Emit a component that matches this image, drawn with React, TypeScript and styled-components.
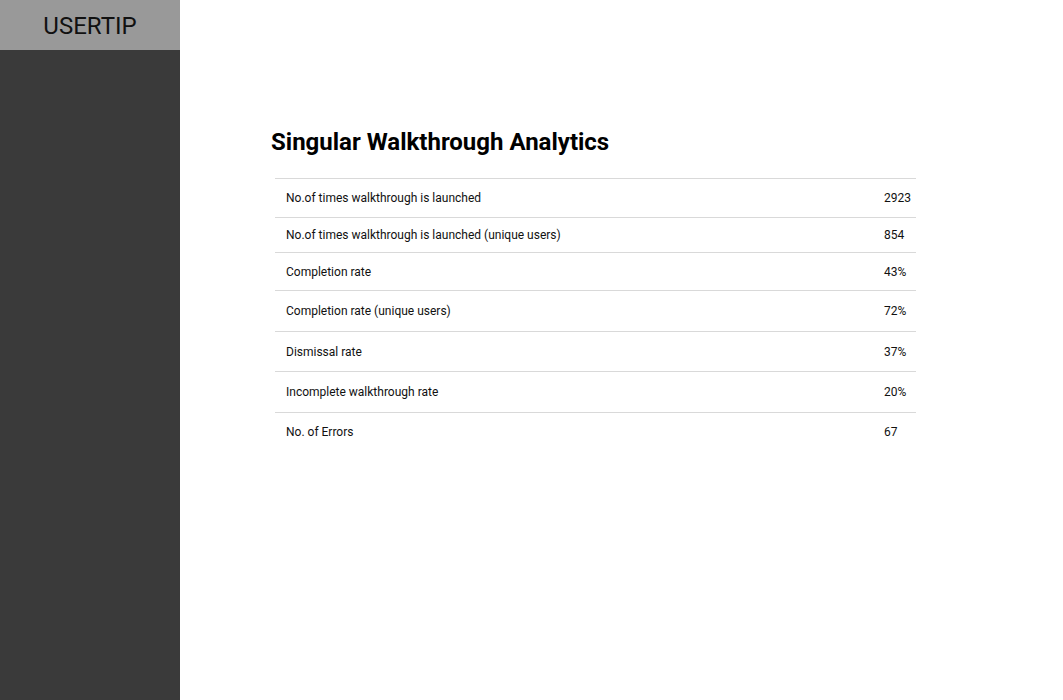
import { createGlobalStyle, styled } from 'styled-components';

const GlobalStyle = createGlobalStyle`
  html, body {
    margin: 0;
    padding: 0;
    background: #ffffff;
    font-family: Roboto, "Liberation Sans", sans-serif;
    color: #000;
  }
`;

const Layout = styled.div`
  display: flex;
  min-height: 700px;
`;

const Sidebar = styled.aside`
  width: 180px;
  flex-shrink: 0;
  background: #3a3a3a;
  display: flex;
  flex-direction: column;
`;

const Brand = styled.div`
  height: 50px;
  background: #999999;
  display: flex;
  align-items: center;
  justify-content: center;
  font-size: 24px;
  color: #111;
  padding-top: 2px;
  box-sizing: border-box;
`;

const Main = styled.main`
  flex: 1;
  padding: 125px 0 0 91px;
`;

const Title = styled.h1`
  margin: 0 0 19px;
  font-size: 24px;
  font-weight: 700;
  line-height: 34px;
`;

const Table = styled.div`
  margin-left: 4px;
  width: 641px;
`;

const Row = styled.div<{ $h: number }>`
  display: flex;
  align-items: center;
  height: ${(p) => p.$h}px;
  border-top: 1px solid #d9d9d9;
  font-size: 12px;
  color: #111;
`;

const Label = styled.div`
  flex: 1;
  padding-left: 11px;
`;

const Value = styled.div`
  width: 32px;
`;

const rows = [
  { label: 'No.of times walkthrough is launched', value: '2923', h: 38 },
  { label: 'No.of times walkthrough is launched (unique users)', value: '854', h: 34 },
  { label: 'Completion rate', value: '43%', h: 37 },
  { label: 'Completion rate (unique users)', value: '72%', h: 40 },
  { label: 'Dismissal rate', value: '37%', h: 39 },
  { label: 'Incomplete walkthrough rate', value: '20%', h: 40 },
  { label: 'No. of Errors', value: '67', h: 38 },
];

const App = () => {
  return (
    <>
      <GlobalStyle />
      <Layout>
        <Sidebar>
          <Brand>USERTIP</Brand>
        </Sidebar>
        <Main>
          <Title>Singular Walkthrough Analytics</Title>
          <Table>
            {rows.map((r) => (
              <Row key={r.label} $h={r.h}>
                <Label>{r.label}</Label>
                <Value>{r.value}</Value>
              </Row>
            ))}
          </Table>
        </Main>
      </Layout>
    </>
  );
};

export default App;
